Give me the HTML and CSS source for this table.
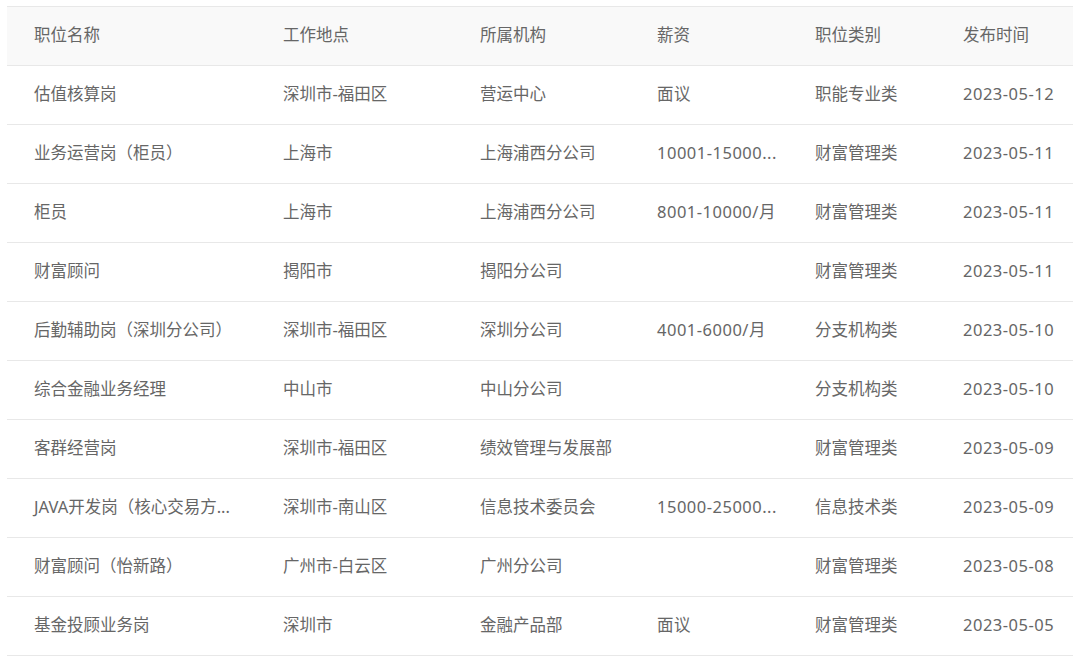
FILE: index.html
```html
<!DOCTYPE html>
<html lang="zh-CN">
<head>
<meta charset="utf-8">
<title>职位列表</title>
<link rel="stylesheet" href="styles.css">
</head>
<body>
<div class="wrap">
<table class="jobs">
  <colgroup>
    <col class="c1"><col class="c2"><col class="c3"><col class="c4"><col class="c5"><col class="c6">
  </colgroup>
  <thead>
    <tr><th>职位名称</th><th>工作地点</th><th>所属机构</th><th>薪资</th><th>职位类别</th><th>发布时间</th></tr>
  </thead>
  <tbody>
    <tr><td>估值核算岗</td><td>深圳市-福田区</td><td>营运中心</td><td class="num">面议</td><td>职能专业类</td><td class="num">2023-05-12</td></tr>
    <tr><td>业务运营岗（柜员）</td><td>上海市</td><td>上海浦西分公司</td><td class="num">10001-15000...</td><td>财富管理类</td><td class="num">2023-05-11</td></tr>
    <tr><td>柜员</td><td>上海市</td><td>上海浦西分公司</td><td class="num">8001-10000/月</td><td>财富管理类</td><td class="num">2023-05-11</td></tr>
    <tr><td>财富顾问</td><td>揭阳市</td><td>揭阳分公司</td><td class="num"></td><td>财富管理类</td><td class="num">2023-05-11</td></tr>
    <tr><td>后勤辅助岗（深圳分公司）</td><td>深圳市-福田区</td><td>深圳分公司</td><td class="num">4001-6000/月</td><td>分支机构类</td><td class="num">2023-05-10</td></tr>
    <tr><td>综合金融业务经理</td><td>中山市</td><td>中山分公司</td><td class="num"></td><td>分支机构类</td><td class="num">2023-05-10</td></tr>
    <tr><td>客群经营岗</td><td>深圳市-福田区</td><td>绩效管理与发展部</td><td class="num"></td><td>财富管理类</td><td class="num">2023-05-09</td></tr>
    <tr><td>JAVA开发岗（核心交易方...</td><td>深圳市-南山区</td><td>信息技术委员会</td><td class="num">15000-25000...</td><td>信息技术类</td><td class="num">2023-05-09</td></tr>
    <tr><td>财富顾问（怡新路）</td><td>广州市-白云区</td><td>广州分公司</td><td class="num"></td><td>财富管理类</td><td class="num">2023-05-08</td></tr>
    <tr><td>基金投顾业务岗</td><td>深圳市</td><td>金融产品部</td><td class="num">面议</td><td>财富管理类</td><td class="num">2023-05-05</td></tr>
  </tbody>
</table>
</div>
</body>
</html>
```
FILE: styles.css
```css
html, body {
  margin: 0;
  padding: 0;
  background: #ffffff;
}
.wrap {
  padding: 6px 7px 0 7px;
}
.jobs {
  width: 1066px;
  border-collapse: collapse;
  table-layout: fixed;
  font-family: "Noto Sans", "Noto Sans CJK SC", sans-serif;
  font-size: 16.5px;
  line-height: 20px;
  color: #666666;
}
.c1 { width: 249px; }
.c2 { width: 197px; }
.c3 { width: 177px; }
.c4 { width: 158px; }
.c5 { width: 148px; }
.c6 { width: 137px; }
.jobs th,
.jobs td {
  height: 56px;
  padding: 0 4px 2px 27px;
  text-align: left;
  font-weight: normal;
  white-space: nowrap;
  overflow: hidden;
  border-bottom: 1px solid #e8e8e8;
}
.jobs td.num {
  letter-spacing: 0.5px;
}
.jobs thead th {
  background: #f9f9f9;
  border-top: 1px solid #e8e8e8;
  color: #666666;
}
```
